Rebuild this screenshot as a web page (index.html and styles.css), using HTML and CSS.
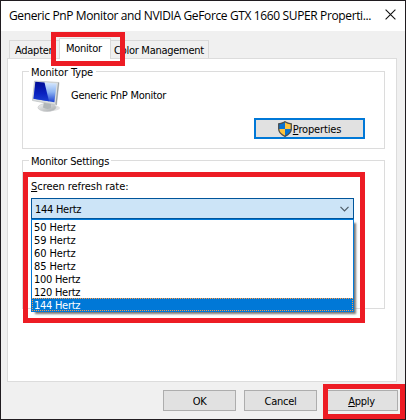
FILE: index.html
```html
<!DOCTYPE html>
<html lang="en">
<head>
<meta charset="utf-8">
<title>Monitor Properties</title>
<link rel="stylesheet" href="styles.css">
</head>
<body>
<main class="window">
  <header class="titlebar">
    <h1 class="title">Generic PnP Monitor and NVIDIA GeForce GTX 1660 SUPER Properti...</h1>
    <svg class="close" width="11" height="11" viewBox="0 0 11 11"><path d="M.6.6l9.8 9.8M10.4.6L.6 10.4" stroke="#111" stroke-width="1.1"/></svg>
  </header>
  <nav class="tabs">
    <div class="tab adapter"><span>Adapter</span></div>
    <div class="tab active"><span>Monitor</span></div>
    <div class="tab color"><span>Color Management</span></div>
  </nav>
  <section class="panel">
    <div class="group type">
      <div class="legend legend-type"><span>Monitor Type</span></div>
      <div class="device">
        <svg class="monitor" width="30" height="34" viewBox="0 0 30 34">
          <defs>
            <linearGradient id="screen" x1="0" y1="0" x2="0" y2="1"><stop offset="0" stop-color="#dcecff"/><stop offset=".5" stop-color="#8db4f2"/><stop offset="1" stop-color="#1b3fd0"/></linearGradient>
            <linearGradient id="deep" x1="0" y1="0" x2="0" y2="1"><stop offset="0" stop-color="#000c96"/><stop offset=".6" stop-color="#0a22c0"/><stop offset="1" stop-color="#1b3fd0"/></linearGradient>
            <linearGradient id="base" x1="0" y1="0" x2="1" y2="1"><stop offset="0" stop-color="#f5f5f5"/><stop offset="1" stop-color="#a4a8aa"/></linearGradient>
          </defs>
          <ellipse cx="20" cy="28" rx="8" ry="3" fill="#e2e2e2"/>
          <ellipse cx="15" cy="27.500" rx="9" ry="4" fill="url(#base)" stroke="#c2c5c6" stroke-width=".6"/>
          <path d="M12 22l7 1v5q-4 2-8-.5z" fill="#b1b6b8"/>
          <path d="M2.500 1L27 2.500 24.500 25 .5 20.500z" fill="#dcdfdf" stroke="#b8bdbe" stroke-width=".7"/>
          <path d="M27 2.500L24.500 25l-1-1.200L26 3z" fill="#989da0"/>
          <path d="M3.300 1.800L24.600 3.400 22.400 22.200 1.500 18.700z" fill="url(#screen)"/>
          <path d="M3.300 1.800L12.500 2.500l4.500 18.700L1.500 18.700z" fill="url(#deep)"/>
        </svg>
        <span>Generic PnP Monitor</span>
      </div>
      <button class="button properties"><svg width="14" height="16" viewBox="0 0 14 16"><path d="M7 .5Q9.500 2.200 13.300 2.600V8q0 4.500-6.300 7.500Q.7 12.500.7 8V2.600Q4.500 2.200 7 .5z" fill="#ffc33c"/><path d="M7 .5V8H.7V2.600Q4.500 2.200 7 .5zM7 8h6.300q0 4.500-6.300 7.500z" fill="#0872d0"/><path d="M7 .7Q9.500 2.400 13.300 2.800V8q0 4.500-6.300 7.300Q.7 12.500.7 8V2.800Q4.500 2.400 7 .7z" fill="none" stroke="#4a4e50" stroke-width="1.300"/></svg><span><u>P</u>roperties</span></button>
    </div>
    <div class="group settings">
      <div class="legend legend-settings"><span>Monitor Settings</span></div>
      <div class="label"><span><u>S</u>creen refresh rate:</span></div>
      <div class="select"><span>144 Hertz</span><svg width="9" height="6" viewBox="0 0 9 6"><path d="M.5.800l4 4 4-4" fill="none" stroke="#4d5b66" stroke-width="1.200"/></svg></div>
      <ul class="options">
        <li class="short">50 Hertz</li>
        <li class="short">59 Hertz</li>
        <li class="short">60 Hertz</li>
        <li class="short">85 Hertz</li>
        <li>100 Hertz</li>
        <li>120 Hertz</li>
        <li class="chosen">144 Hertz</li>
      </ul>
    </div>
  </section>
  <footer class="actions">
    <button class="button"><span>OK</span></button>
    <button class="button"><span>Cancel</span></button>
    <button class="button"><span><u>A</u>pply</span></button>
  </footer>
  <div class="mark mark-tab"></div>
  <div class="mark mark-rate"></div>
  <div class="mark mark-apply"></div>
</main>
</body>
</html>
```
FILE: styles.css
```css
* { box-sizing: border-box; }
body { margin: 0; }
.window {
  position: relative;
  width: 406px;
  height: 420px;
  border: 1px solid #201c20;
  background: #f0f0f0;
  color: #000;
  font: 11px/13px "DejaVu Sans Condensed", "DejaVu Sans", sans-serif;
  font-stretch: condensed;
  letter-spacing: -.27px;
  overflow: hidden;
  white-space: nowrap;
}
.titlebar { display: flex; justify-content: space-between; height: 30px; padding: 7px 9px 0 8px; background: #fff; }
.title { margin: 0; font: 12px/16px "Open Sans", "Noto Sans", sans-serif; letter-spacing: -.37px; }
.close { margin-top: 1px; flex: none; }
.tabs { display: flex; align-items: flex-end; height: 27px; padding-left: 8px; }
.tab { height: 18px; border: 1px solid #d9d9d9; border-bottom: 0; padding-top: 3px; }
.adapter { width: 50px; padding-left: 5px; border-right: 0; }
.tab.active { width: 52px; height: 21px; margin-bottom: -1px; padding: 3px 0 0 6px; background: #fff; z-index: 1; }
.color { width: 98px; padding-left: 3px; border-left: 0; }
.panel { width: 390px; height: 324px; margin-left: 6px; padding: 12px 11px 0 14px; border: 1px solid #dcdcdc; background: #fff; }
.group { border: 1px solid #dcdcdc; }
.type { height: 78px; margin-bottom: 11px; }
.settings { height: 149px; }
.legend { height: 14px; margin: -7px 0 -1px 6px; padding: 1px 2px 0; background: #fff; }
.legend-type { width: 67px; letter-spacing: -.1px; }
.legend-settings { width: 82px; letter-spacing: -.2px; }
.device { display: flex; gap: 9px; height: 34px; padding: 2px 0 0 9px; }
.device svg { flex: none; }
.device span { margin-top: 9px; }
.button { display: flex; align-items: center; justify-content: center; width: 73px; height: 21px; padding: 0; border: 1px solid #adadad; background: #e1e1e1; color: #000; font: inherit; letter-spacing: inherit; }
.button span { padding-top: 2px; }
.properties { width: 111px; margin: 6px 0 0 231px; border: 2px solid #0078d7; letter-spacing: -.15px; }
.properties svg { flex: none; margin-right: 1px; }
u { text-decoration-thickness: 1px; text-underline-offset: 1px; }
.label { padding: 13px 0 0 8px; height: 31px; letter-spacing: -.05px; }
.select { display: flex; align-items: center; justify-content: space-between; width: 323px; height: 21px; margin-left: 8px; padding: 0 4px 0 3px; border: 1px solid #00559b; background: #cce4f7; }
.select span { padding-top: 2px; }
.options { width: 323px; height: 93px; margin: 0 0 0 8px; padding: 0 0 0 2px; border: 1px solid #0078d7; background: #fff; list-style: none; box-shadow: 3px 3px 2px -1px #777; }
.options li { height: 13px; line-height: 16px; }
.options .short { letter-spacing: -.1px; }
.options .chosen { margin-left: -2px; padding-left: 1px; border: 1px dotted #ff9a45; background: #0078d7; color: #fff; line-height: 14px; }
.actions { display: flex; gap: 8px; justify-content: flex-end; padding: 8px 7px 0 0; }
.mark { position: absolute; border: 5px solid #ed1c24; z-index: 2; }
.mark-tab { left: 50px; top: 31px; width: 74px; height: 34px; }
.mark-rate { left: 22px; top: 171px; width: 342px; height: 151px; }
.mark-apply { left: 322px; top: 383px; width: 82px; height: 35px; }
```
